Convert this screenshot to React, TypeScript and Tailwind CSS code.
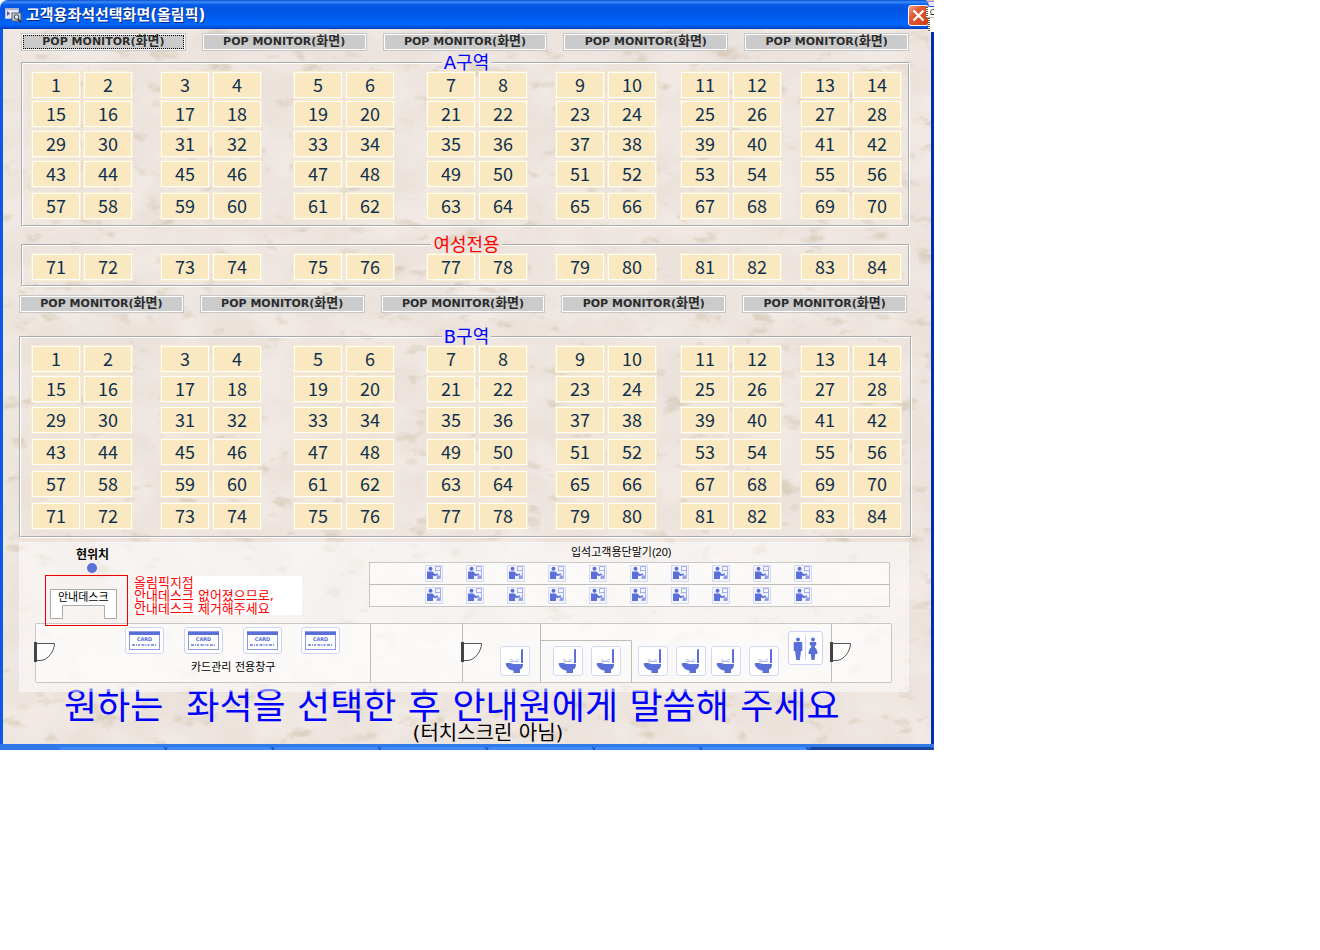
import type { ReactNode } from "react";

const rows = (count: number) =>
  Array.from({ length: count }, (_, r) =>
    Array.from({ length: 7 }, (_, p) => [r * 14 + p * 2 + 1, r * 14 + p * 2 + 2]),
  );

const UPPER_ROWS = rows(5);
const WOMEN_ROWS = rows(6).slice(5);
const LOWER_ROWS = rows(6);

function Marble() {
  return (
    <svg className="absolute inset-0 h-full w-full" aria-hidden="true">
      <filter id="clouds" x="0" y="0" width="100%" height="100%" colorInterpolationFilters="sRGB">
        <feTurbulence type="fractalNoise" baseFrequency="0.02 0.024" numOctaves={4} seed={8} />
        <feColorMatrix values="0 0 0 0 0.96  0 0 0 0 0.93  0 0 0 0 0.91  2.2 0 0 0 -0.7" />
      </filter>
      <filter id="specks" x="0" y="0" width="100%" height="100%" colorInterpolationFilters="sRGB">
        <feTurbulence type="fractalNoise" baseFrequency="0.035 0.06" numOctaves={4} seed={23} />
        <feColorMatrix values="0 0 0 0 0.8  0 0 0 0 0.75  0 0 0 0 0.65  0 5 0 0 -3.15" />
      </filter>
      <rect width="100%" height="100%" fill="#ebe2dc" />
      <rect width="100%" height="100%" filter="url(#clouds)" opacity="0.7" />
      <rect width="100%" height="100%" filter="url(#specks)" opacity="0.5" />
    </svg>
  );
}

function MonitorRow({ className, focused = false }: { className: string; focused?: boolean }) {
  return (
    <div className={`grid grid-cols-5 gap-4 ${className}`}>
      {[0, 1, 2, 3, 4].map((i) => (
        <button
          key={i}
          type="button"
          className={`flex h-[18px] items-center justify-center overflow-hidden border border-[#c6c6c6] bg-[#cbcbcb] pb-[2px] text-[11px] font-bold leading-3 text-[#2b2b2b] shadow-[inset_0_0_0_1px_#fff] ${
            focused && i === 0 ? "outline-1 -outline-offset-3 outline-dotted outline-black" : ""
          }`}
        >
          <span className="whitespace-nowrap">
            POP MONITOR(<span className="text-[13px]">화면</span>)
          </span>
        </button>
      ))}
    </div>
  );
}

function Seat({ n }: { n: number }) {
  return (
    <button
      type="button"
      className="h-7 w-[50px] border border-[#fbecc9] bg-[#fae8c0] pb-0.5 font-['Noto_Sans_CJK_KR',sans-serif] text-lg leading-6 text-[#10304f] shadow-[inset_0_0_0_1px_#fff]"
    >
      {n}
    </button>
  );
}

function Zone({
  title,
  titleClass,
  className,
  gridClass,
  seats,
}: {
  title: string;
  titleClass: string;
  className: string;
  gridClass: string;
  seats: number[][][];
}) {
  return (
    <fieldset className={`border-2 border-white [border-style:groove] ${className}`}>
      <legend className={`mx-auto px-0.5 text-lg leading-4 ${titleClass}`}>{title}</legend>
      <div className={`grid grid-cols-[129fr_133fr_133fr_129fr_125fr_120fr_102fr] ${gridClass}`}>
        {seats.flat().map(([a, b]) => (
          <div key={a} className="flex gap-0.5">
            <Seat n={a} />
            <Seat n={b} />
          </div>
        ))}
      </div>
    </fieldset>
  );
}

const BLUE = "#5a6fd8";
const LINE = "#c9c7c5";

function Door({ x }: { x: number }) {
  return (
    <g transform={`translate(${x} 642)`}>
      <rect width="3" height="20" fill="#444" />
      <path d="M3 1.5H20.5C20.5 9 14 18.500 6 18.500H3" fill="#fff" fillOpacity="0.5" stroke="#555" />
    </g>
  );
}

function Terminal({ x, y }: { x: number; y: number }) {
  return (
    <g transform={`translate(${x} ${y})`}>
      <rect x="0.5" y="0.500" width="17" height="16" fill="#f5f6fd" stroke="#d5daf3" />
      <circle cx="5.500" cy="3.700" r="2" fill={BLUE} />
      <path d="M2 6.500h5.500l2.500 2.700 2.500-1 .6 1.500-3.600 1.500-1.500-1V14H2z" fill={BLUE} />
      <path d="M10.500 6.500V1.500h5v12h-4M10.500 5.500h5M13 9.500l-1.500 4" fill="none" stroke="#a4afec" />
      <path d="M12 10.500h3v3h-3z" fill="#8f9de6" />
    </g>
  );
}

function Card({ x }: { x: number }) {
  return (
    <g transform={`translate(${x} 627)`}>
      <rect x="0.500" y="0.500" width="38" height="26" rx="2.500" fill="#fff" stroke="#cdd3f2" />
      <rect x="4.500" y="4.500" width="30" height="18" fill="#fff" stroke="#8c9ce4" />
      <rect x="4" y="5" width="31" height="3" fill={BLUE} />
      <text
        x="19.500"
        y="14"
        textAnchor="middle"
        fontSize="5"
        fontWeight="bold"
        fontFamily="'DejaVu Sans', sans-serif"
        fill={BLUE}
      >
        CARD
      </text>
      <path d="M7 18h25" stroke={BLUE} strokeWidth="2" strokeDasharray="3 1 1 1 2 1.500" opacity="0.7" />
    </g>
  );
}

function Toilet({ x }: { x: number }) {
  return (
    <g transform={`translate(${x} 646)`}>
      <rect x="0.500" y="0.500" width="29" height="29" rx="2.500" fill="#fff" stroke="#d3d9f4" />
      <path d="M21 3.500 23 3v14h-2z" fill={BLUE} />
      <path
        d="M5.500 17.500c3-1 6 0 8.500.5h9c.2 3.500-1.500 5-3 5.500V27h-6.500v-2.500C9 24 6.500 21.500 5.500 17.500z"
        fill={BLUE}
      />
      <path d="M10 13.500c2 0 3.500 1 4.500 2.500 1-1.500 2.500-2.500 4.500-2.500M10 15.500h9" fill="none" stroke="#b3bced" />
    </g>
  );
}

function Restroom() {
  return (
    <g transform="translate(788 631)">
      <rect x="0.500" y="0.500" width="34" height="33" rx="2.500" fill="#fff" stroke="#cdd3f2" />
      <path d="M17.500 4v25" stroke="#cdd3f2" />
      <circle cx="10" cy="8.500" r="2" fill={BLUE} />
      <path d="M6.500 11h7c.5 0 .8.400.8 1v8h-1.500v2l-1 7H8.300l-1-7v-2H5.700v-8c0-.6.3-1 .8-1z" fill={BLUE} />
      <circle cx="25" cy="8.500" r="2" fill={BLUE} />
      <path
        d="M22 11h6l.5 2-2 3c2 1.500 3 4 3 7h-2.300l-.7 6h-3l-.7-6h-2.300c0-3 1-5.500 3-7l-2-3z"
        fill={BLUE}
      />
    </g>
  );
}

function Label({ className, children }: { className: string; children: ReactNode }) {
  return <span className={`absolute whitespace-nowrap text-black ${className}`}>{children}</span>;
}

function FloorPlan() {
  const desks = Array.from({ length: 10 }, (_, i) => 425 + i * 41);
  return (
    <section className="relative ml-4 mr-[22px] mt-1 h-[150px] bg-white/50">
      <svg className="block h-[150px] w-[890px]" viewBox="19 542 890 150" aria-hidden="true">
        <g fill="#fff" fillOpacity="0.55" stroke={LINE}>
          <rect x="369.500" y="562.500" width="520" height="44" />
          <rect x="35.500" y="623.500" width="856" height="59" rx="1" />
        </g>
        <path
          d="M369.500 584.500h520M370.500 624v58M462.500 624v58M540.500 624v58M831.500 624v58M540.500 640.500h91v42"
          fill="none"
          stroke="#bebcba"
        />
        {desks.map((x) => (
          <g key={x}>
            <Terminal x={x} y={565} />
            <Terminal x={x} y={587} />
          </g>
        ))}
        {[34, 461, 830].map((x) => (
          <Door key={x} x={x} />
        ))}
        {[125, 184, 243, 301].map((x) => (
          <Card key={x} x={x} />
        ))}
        {[500, 553, 591, 638, 676, 711, 749].map((x) => (
          <Toilet key={x} x={x} />
        ))}
        <Restroom />
        <circle cx="92" cy="568" r="5" fill={BLUE} />
        <path d="M50.500 589.500h66v29h-12v-13h-42v13h-12z" fill="#fff" stroke="#aaa" />
        <rect x="45.500" y="575.500" width="82" height="50" fill="none" stroke="#f00000" />
      </svg>
      <Label className="left-[57px] top-[5px] text-xs font-bold leading-4">현위치</Label>
      <Label className="left-[39px] top-12 text-[11px] leading-4">안내데스크</Label>
      <Label className="left-[172px] top-[118px] text-[11px] leading-4">카드관리 전용창구</Label>
      <Label className="left-[552px] top-0.5 font-['Liberation_Sans','Noto_Sans_CJK_KR',sans-serif] text-[11px] leading-4">
        입석고객용단말기(20)
      </Label>
      <p className="absolute left-[115px] top-[34px] h-[39px] w-[168px] whitespace-nowrap bg-white text-[13px] leading-[13px] text-[#ff0000]">
        올림픽지점
        <br />
        안내데스크 없어졌으므로,
        <br />
        안내데스크 제거해주세요
      </p>
    </section>
  );
}

function TitleBar() {
  return (
    <header className="relative z-10 flex h-[29px] items-center rounded-tl-lg bg-[linear-gradient(180deg,#0a4fd0_0%,#3c8cf8_7%,#0a5be8_16%,#0054e3_35%,#0060f4_65%,#0066ff_85%,#0050d8_94%,#003cb8_100%)] pl-[5px] pr-[5px]">
      <svg width="17" height="16" viewBox="0 0 17 16" aria-hidden="true">
        <rect x="0.500" y="1.500" width="13" height="10" fill="#e8e8f4" stroke="#b8bccb" />
        <path d="M0 1h14v2H0z" fill="#aab4cc" />
        <path d="m2 4 3 2.500L2 9z" fill="#5b46b8" />
        <rect x="7" y="6" width="9" height="8" fill="#c9ccd0" stroke="#596474" />
        <circle cx="11.500" cy="10" r="2.300" fill="#dfeaf2" stroke="#394250" />
        <path d="m13 12 3 3" stroke="#222" strokeWidth="1.500" />
      </svg>
      <h1 className="ml-1 flex-1 whitespace-nowrap text-[15px] font-bold leading-5 text-white [text-shadow:1px_1px_0_#0a2a80]">
        고객용좌석선택화면(올림픽)
      </h1>
      <button
        type="button"
        aria-label="닫기"
        className="mt-0.5 flex size-[21px] items-center justify-center rounded-[3px] border border-white bg-[linear-gradient(135deg,#f0a088,#e25a38_35%,#cf3d12)]"
      >
        <svg width="13" height="13" viewBox="0 0 13 13" aria-hidden="true">
          <path d="m1.500 1.500 10 10m0-10-10 10" stroke="#fff" strokeWidth="2.200" />
        </svg>
      </button>
      <svg className="absolute right-0 top-0" width="8" height="32" viewBox="0 0 8 32" aria-hidden="true">
        <path d="M0 0h8v1.500H1z" fill="#e8b4c4" />
        <path d="M2 2h6v4H3z" fill="#f4dfe6" />
        <rect x="0" y="7" width="8" height="11" fill="#fffdf0" />
        <path d="M1 7v11" stroke="#555" strokeWidth="2" strokeDasharray="1 1" />
        <path d="M5 13.500c-1-3 1-4.500 3-4M4.500 14.500H8" fill="none" stroke="#333" />
        <rect x="2" y="18" width="6" height="14" fill="#fffdf0" />
        <path d="M3 18v13" stroke="#555" strokeWidth="2" strokeDasharray="1 1" />
        <path d="M1 17.500h7" stroke="#c9bda8" />
      </svg>
    </header>
  );
}

export default function App() {
  return (
    <div className="min-h-screen bg-white font-['DejaVu_Sans','Noto_Sans_CJK_KR',sans-serif]">
      <div className="w-full max-w-[934px]">
        <TitleBar />
        <main className="relative border-l-3 border-r-3 border-l-[#0a5ae6] border-r-[#0030b0]">
          <Marble />
          <div className="relative pt-1">
            <MonitorRow className="ml-[18px] mr-[22px]" focused />
            <Zone
              title="A구역"
              titleClass="text-[#0000ff]"
              className="ml-[18px] mr-[21px] mt-1 pb-[5px] pl-2 pr-1.5"
              gridClass="grid-rows-[29px_30px_30px_32px_28px]"
              seats={UPPER_ROWS}
            />
            <Zone
              title="여성전용"
              titleClass="text-[#ff0000]"
              className="ml-[18px] mr-[21px] mt-2.5 pb-1 pl-2 pr-1.5"
              gridClass="grid-rows-[28px]"
              seats={WOMEN_ROWS}
            />
            <MonitorRow className="ml-4 mr-6 mt-2" />
            <Zone
              title="B구역"
              titleClass="text-[#0000ff]"
              className="ml-4 mr-[19px] mt-4 pb-1.5 pl-2.5 pr-2"
              gridClass="grid-rows-[30px_31px_32px_32px_32px_28px]"
              seats={LOWER_ROWS}
            />
            <FloorPlan />
            <p className="ml-[61px] whitespace-pre text-4xl leading-[30px] text-[#0000ff]">
              원하는{"  "}좌석을 선택한 후 안내원에게 말씀해 주세요
            </p>
            <p className="ml-[42px] text-center text-[20px] leading-[22px] text-black">(터치스크린 아님)</p>
          </div>
        </main>
        <footer className="flex h-1.5 items-end gap-0.5 bg-[#2f7ae8] pl-[60px]">
          {[0, 1, 2, 3, 4, 5, 6].map((i) => (
            <span key={i} className="h-[3px] w-[105px] rounded-t-sm bg-[#3f8cf6] shadow-[2px_0_0_#1c55b8]" />
          ))}
          <span className="h-[3px] flex-1 rounded-t-sm bg-[#1846a0]" />
        </footer>
      </div>
    </div>
  );
}
